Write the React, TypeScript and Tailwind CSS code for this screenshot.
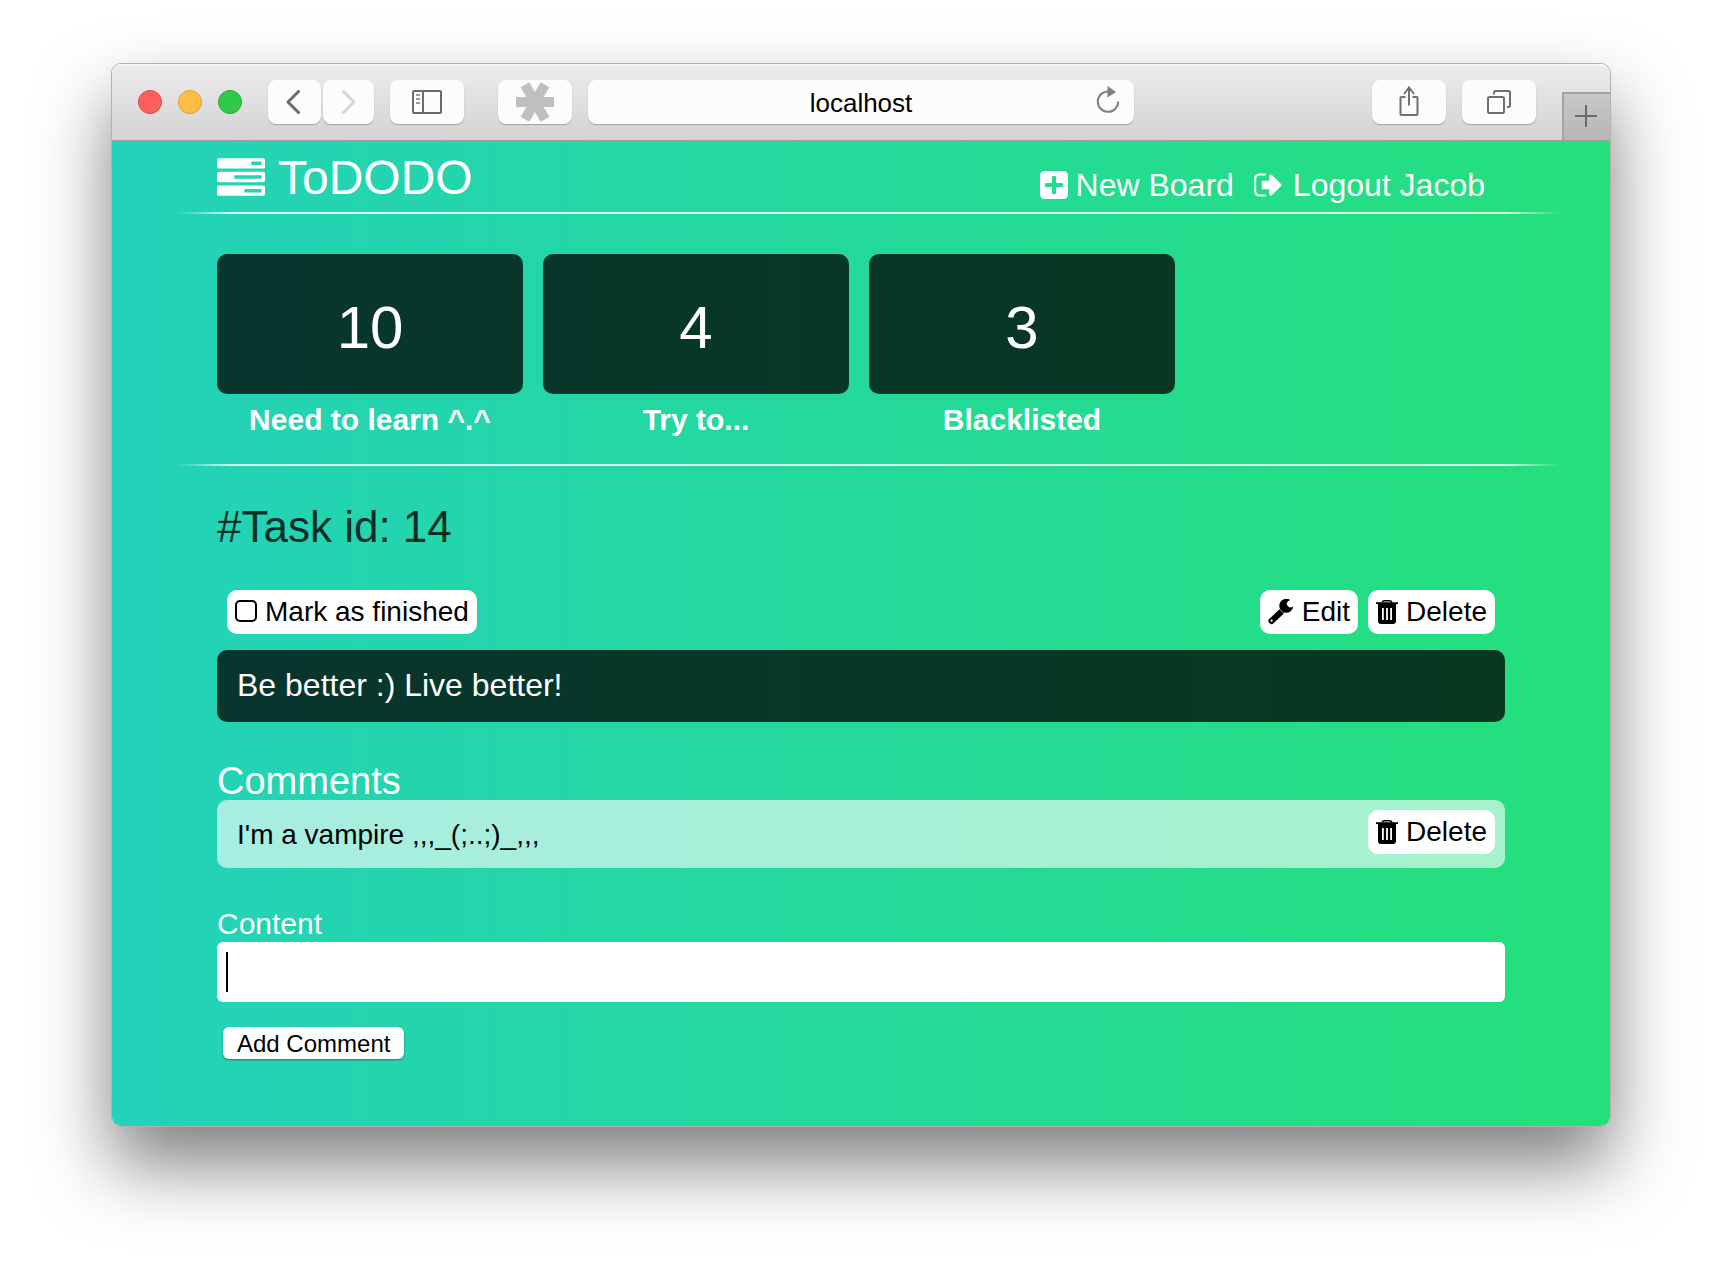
import React from 'react';

const TASKS =
  'M1024 1408h640v-128h-640v128zm-384-512h1024v-128h-1024v128zm640-512h384v-128h-384v128zm512 832v256q0 26-19 45t-45 19h-1664q-26 0-45-19t-19-45v-256q0-26 19-45t45-19h1664q26 0 45 19t19 45zm0-512v256q0 26-19 45t-45 19h-1664q-26 0-45-19t-19-45v-256q0-26 19-45t45-19h1664q26 0 45 19t19 45zm0-512v256q0 26-19 45t-45 19h-1664q-26 0-45-19t-19-45v-256q0-26 19-45t45-19h1664q26 0 45 19t19 45z';

function TasksIcon() {
  return (
    <svg viewBox="0 128 1792 1408" className="mb-0.5 h-[38px] w-12" fill="currentColor" aria-hidden="true">
      <path d={TASKS} />
    </svg>
  );
}

function PlusSquareIcon() {
  return (
    <svg viewBox="0 0 28 28" className="size-7" aria-hidden="true">
      <path
        fill="currentColor"
        fillRule="evenodd"
        d="M5 0H23Q28 0 28 5V23Q28 28 23 28H5Q0 28 0 23V5Q0 0 5 0ZM13 5Q12 5 12 6V12H6Q5 12 5 13V15Q5 16 6 16H12V22Q12 23 13 23H15Q16 23 16 22V16H22Q23 16 23 15V13Q23 12 22 12H16V6Q16 5 15 5Z"
      />
    </svg>
  );
}

function SignOutIcon() {
  return (
    <svg viewBox="0 0 28 24" className="h-6 w-7" aria-hidden="true">
      <path d="M11 1.500H6Q1.200 1.500 1.200 6V18Q1.200 22.500 6 22.500H11" fill="none" stroke="currentColor" strokeWidth="2" strokeLinecap="round" />
      <path
        d="M8.500 8.500H16V3L17 2L27 12L17 22L16 21V15.500H8.500Z"
        fill="currentColor"
        stroke="currentColor"
        strokeWidth="1.500"
        strokeLinejoin="round"
      />
    </svg>
  );
}

function WrenchIcon() {
  return (
    <svg viewBox="0 0 26 26" className="size-[26px]" aria-hidden="true">
      <path d="M22.300 1A7 7 0 1 0 25.300 7.200Q23 9.200 20.500 7.800L18.700 5.600Q18.300 2.800 22.300 1Z" fill="currentColor" />
      <path d="M3.500 22L13.500 12.500" stroke="currentColor" strokeWidth="6" strokeLinecap="round" />
      <path d="M11 9.500L16.800 15.300" stroke="#fff" strokeWidth="0.700" />
      <circle cx="3.600" cy="21.700" r="1.100" fill="#fff" />
    </svg>
  );
}

function TrashIcon() {
  return (
    <svg viewBox="0 0 22 24" className="h-6 w-[22px]" aria-hidden="true">
      <path d="M6 2.500Q6.500 0.700 8.500 0.700H13.500Q15.500 0.700 16 2.500" fill="none" stroke="currentColor" strokeWidth="1.400" />
      <path
        fill="currentColor"
        fillRule="evenodd"
        d="M0 2.300H22V4H20V21Q20 24 17 24H5Q2 24 2 21V4H0ZM6 8V20H7.800V8ZM10.100 8V20H11.900V8ZM14.200 8V20H16V8Z"
      />
    </svg>
  );
}

function ToolButton({ label, className, children }: { label: string; className: string; children: React.ReactNode }) {
  return (
    <button
      type="button"
      aria-label={label}
      className={`flex h-11 shrink-0 items-center justify-center rounded-lg bg-[#fcfcfc] shadow-[0_1px_1px_rgba(0,0,0,0.25)] ${className}`}
    >
      {children}
    </button>
  );
}

function Toolbar() {
  return (
    <div className="flex items-start border-b-2 border-[#9e9e9e] bg-linear-to-b from-[#ececec] to-[#d3d3d3] pl-[26px] shadow-[inset_0_2px_0_#f6f6f6]">
      <div className="mt-[26px] flex shrink-0 gap-4">
        <button type="button" aria-label="Close window" className="size-6 rounded-full border border-[#e0443e] bg-[#fd605c]" />
        <button type="button" aria-label="Minimize window" className="size-6 rounded-full border border-[#de9f34] bg-[#fdbe41]" />
        <button type="button" aria-label="Zoom window" className="size-6 rounded-full border border-[#27aa35] bg-[#33c948]" />
      </div>
      <div className="mt-4 mb-4 ml-[26px] flex min-w-0 grow">
        <ToolButton label="Back" className="w-[53px]">
          <svg className="mr-1 h-6 w-4" viewBox="0 0 16 24" fill="none" stroke="#6b6b6b" strokeWidth="3" strokeLinecap="round" strokeLinejoin="round">
            <path d="M13.500 1.500L3 12l10.500 10.500" />
          </svg>
        </ToolButton>
        <ToolButton label="Forward" className="ml-0.5 w-[51px]">
          <svg className="h-6 w-4" viewBox="0 0 16 24" fill="none" stroke="#d6d6d6" strokeWidth="3" strokeLinecap="round" strokeLinejoin="round">
            <path d="M2.500 1.500L13 12L2.500 22.500" />
          </svg>
        </ToolButton>
        <ToolButton label="Show sidebar" className="ml-4 w-[74px]">
          <svg className="h-6 w-[30px]" viewBox="0 0 30 24" fill="none" stroke="#6b6b6b" strokeWidth="2">
            <rect x="1" y="1" width="28" height="22" rx="1" />
            <path d="M11 1v22" />
            <path d="M4 5h4M4 9h4M4 13h4" stroke="#9a9a9a" />
          </svg>
        </ToolButton>
        <ToolButton label="Extension" className="ml-[34px] w-[74px]">
          <svg className="size-10" viewBox="-20 -20 40 40" fill="#bfbfbf">
            <rect x="-19" y="-5" width="38" height="10" />
            <rect x="-20" y="-5" width="40" height="10" transform="rotate(60)" />
            <rect x="-20" y="-5" width="40" height="10" transform="rotate(120)" />
          </svg>
        </ToolButton>
        <div className="relative ml-4 min-w-0 max-w-[546px] grow">
          <input
            aria-label="Address"
            defaultValue="localhost"
            className="block h-11 w-full rounded-lg bg-[#fcfcfc] pt-0.5 text-center text-[26px] text-black shadow-[0_1px_1px_rgba(0,0,0,0.25)] outline-none"
          />
          <button type="button" aria-label="Reload" className="absolute top-1.5 right-3 flex h-8 w-7 items-center justify-center">
            <svg className="h-8 w-7" viewBox="0 0 28 32">
              <path d="M15 5.500A10.200 10.200 0 1 0 24.200 15.600" fill="none" stroke="#7f7f7f" strokeWidth="2" />
              <path d="M13.500 0V11.500L22 6Z" fill="#7f7f7f" />
            </svg>
          </button>
        </div>
        <ToolButton label="Share" className="ml-auto w-[74px]">
          <svg className="h-8 w-6" viewBox="0 0 24 32" fill="none" stroke="#6f6f6f" strokeWidth="2">
            <path d="M9 11H5Q4 11 4 12V28Q4 29 5 29H20Q21 29 21 28V12Q21 11 20 11H16" transform="translate(-0.5 0)" />
            <path d="M12 19.500V1.500M7 8L12 1.500L17 8" />
          </svg>
        </ToolButton>
        <ToolButton label="Show tabs" className="ml-4 w-[74px]">
          <svg className="size-6" viewBox="0 0 24 24" fill="none" stroke="#6f6f6f" strokeWidth="2">
            <rect x="1" y="7" width="16" height="16" rx="1.500" />
            <path d="M7 4.500V2.500Q7 1 8.500 1H21.500Q23 1 23 2.500V15.500Q23 17 21.500 17H20" />
          </svg>
        </ToolButton>
      </div>
      <button
        type="button"
        aria-label="New tab"
        className="mt-7 ml-[26px] flex w-12 shrink-0 items-center justify-center self-stretch border-t-2 border-l-2 border-[#a2a2a2] bg-linear-to-b from-[#c8c8c8] to-[#b6b6b6]"
      >
        <svg className="mr-0.5 mb-0.5 size-[22px]" viewBox="0 0 22 22" stroke="#6a6a6a" strokeWidth="2">
          <path d="M0 11h22M11 0v22" />
        </svg>
      </button>
    </div>
  );
}

function Rule() {
  return (
    <hr className="mr-[50px] ml-16 h-0.5 border-0 bg-[linear-gradient(to_right,rgba(255,255,255,0),rgba(255,255,255,0.8)_4%,rgba(255,255,255,0.8)_96%,rgba(255,255,255,0))]" />
  );
}

const boards = [
  { count: 10, name: 'Need to learn ^.^' },
  { count: 4, name: 'Try to...' },
  { count: 3, name: 'Blacklisted' },
];

function ActionButton({ icon, children }: { icon: React.ReactNode; children: React.ReactNode }) {
  return (
    <button type="button" className="flex h-11 items-center gap-2 rounded-[10px] bg-white px-2 text-[28px] leading-8 text-black">
      {icon}
      {children}
    </button>
  );
}

export default function App() {
  return (
    <div className="min-h-screen bg-white px-[111px] pt-[63px] pb-[159px] font-['Liberation_Sans',Arial,sans-serif]">
      <div className="overflow-hidden rounded-[10px] border border-black/30 shadow-[0_38px_72px_rgba(0,0,0,0.5)]">
        <Toolbar />
        <div className="bg-[linear-gradient(to_right,#23d2ba,#24e07b)]">
          <header className="mx-[105px] flex h-[70px] items-end justify-between text-white">
            <a href="#" className="flex items-center gap-[13px] pb-1.5 text-5xl leading-[56px]">
              <TasksIcon />
              ToDODO
            </a>
            <nav className="mr-5 flex gap-5 pb-[9px] text-[32px] leading-9">
              <a href="#new" className="flex items-center gap-2">
                <PlusSquareIcon />
                New Board
              </a>
              <a href="#logout" className="flex items-center gap-[11px]">
                <SignOutIcon />
                Logout Jacob
              </a>
            </nav>
          </header>
          <Rule />
          <ul className="mx-[105px] flex gap-5 pt-10 pb-[27px]">
            {boards.map((b) => (
              <li key={b.name} className="w-[306px] text-center text-white">
                <a href="#board" className="block">
                  <span className="flex h-[140px] items-center justify-center rounded-[10px] bg-black/75 pt-2 text-[60px] leading-none">
                    {b.count}
                  </span>
                  <span className="mt-[9px] block text-[30px] leading-[34px] font-bold">{b.name}</span>
                </a>
              </li>
            ))}
          </ul>
          <Rule />
          <main className="mx-[105px] pt-9 pb-[67px]">
            <h1 className="text-[44px] leading-[50px] text-black/80">#Task id: 14</h1>
            <div className="mx-2.5 mt-[38px] flex gap-2.5">
              <label className="mr-auto flex h-11 items-center gap-2 rounded-[10px] bg-white px-2 text-[28px] leading-8 text-black">
                <input type="checkbox" className="mb-0.5 size-[22px] appearance-none rounded-[5px] border-2 border-black" />
                Mark as finished
              </label>
              <ActionButton icon={<WrenchIcon />}>Edit</ActionButton>
              <ActionButton icon={<TrashIcon />}>Delete</ActionButton>
            </div>
            <p className="mt-4 rounded-[10px] bg-black/75 px-5 pt-[17px] pb-[19px] text-[32px] leading-9 text-white">Be better :) Live better!</p>
            <h2 className="mt-10 text-[38px] leading-[38px] text-white">Comments</h2>
            <div className="flex h-[68px] items-start justify-between rounded-[10px] bg-white/60 px-2.5 pt-2.5">
              <p className="pt-[9px] pl-2.5 text-[28px] leading-8 text-black">I'm a vampire ,,,_(;..;)_,,,</p>
              <ActionButton icon={<TrashIcon />}>Delete</ActionButton>
            </div>
            <form className="mt-[39px]" onSubmit={(e) => e.preventDefault()}>
              <label htmlFor="content" className="block pb-px text-[30px] leading-[34px] text-white">
                Content
              </label>
              <div className="relative">
                <input id="content" className="block h-[60px] w-full rounded-md bg-white px-2.5 text-[32px] text-black caret-transparent outline-none" />
                <span className="absolute top-2.5 left-[9px] h-10 w-0.5 bg-black" />
              </div>
              <button type="submit" className="mt-[25px] ml-1.5 h-8 rounded-md bg-white px-3.5 pt-0.5 text-2xl leading-[30px] text-black shadow-[0_1px_2px_rgba(0,0,0,0.4)]">
                Add Comment
              </button>
            </form>
          </main>
        </div>
      </div>
    </div>
  );
}
